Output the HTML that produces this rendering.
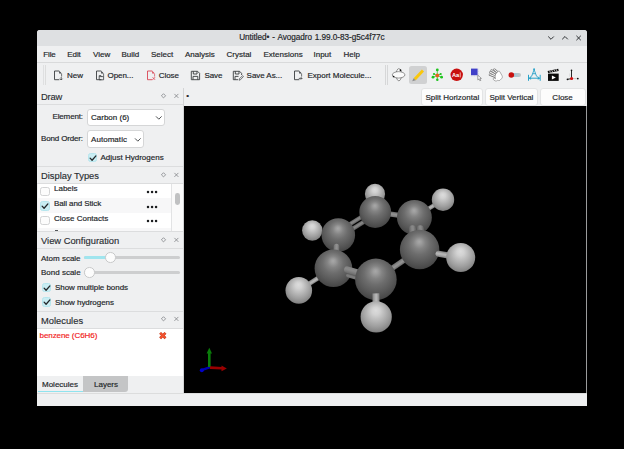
<!DOCTYPE html>
<html>
<head>
<meta charset="utf-8">
<style>
*{box-sizing:border-box;margin:0;padding:0}
html,body{width:624px;height:449px;overflow:hidden;background:#000}
body{font-family:"Liberation Sans",sans-serif;font-size:8px;color:#232629;position:relative;-webkit-text-stroke:0.18px #232629}
.a{position:absolute}
.t{position:absolute;white-space:nowrap;line-height:10px;font-size:8px}
.h{position:absolute;white-space:nowrap;line-height:12px;font-size:9.35px;left:41px;color:#2a2e32;-webkit-text-stroke:0.15px #2a2e32}
.ln{position:absolute;background:#dcddde;height:1px}
.cb{position:absolute;width:9.6px;height:9.4px;border-radius:2.5px;border:1px solid #d2d3d4;background:#fcfcfc}
.cb.on{background:#c9edf3;border-color:#b6e6ee}
.cb.on svg{position:absolute;left:0;top:0}
.combo{position:absolute;background:#fff;border:1px solid #d5d6d7;border-radius:3px;height:17px}
.btn{position:absolute;top:88.2px;height:17.8px;background:#fcfcfc;border:1px solid #e3e4e5;border-radius:3px;text-align:center;line-height:17.6px;font-size:8px}
</style>
</head>
<body>
<!-- window -->
<div class="a" style="left:37px;top:30px;width:550px;height:375.6px;background:#eff0f1;border-radius:3px 3px 0 0"></div>
<!-- title bar -->
<div class="a" style="left:37px;top:30px;width:550px;height:16px;background:#dee0e2;border-radius:3px 3px 0 0"></div>
<div class="t" id="ttl" style="left:239.2px;top:33.3px;font-size:8.2px;word-spacing:0.7px;letter-spacing:-0.05px">Untitled• - Avogadro 1.99.0-83-g5c4f77c</div>
<svg class="a" style="left:545px;top:32px" width="40" height="12" viewBox="0 0 40 12" fill="none" stroke="#2e3134" stroke-width="1">
  <path d="M3.2 4.5 L6 7.3 L8.8 4.5"/>
  <path d="M17.2 7.3 L20 4.5 L22.8 7.3"/>
  <path d="M31.4 3.8 L35.8 8.2 M35.8 3.8 L31.4 8.2"/>
</svg>
<!-- menu -->
<div class="t" style="left:43.3px;top:50px;letter-spacing:-0.15px">File</div>
<div class="t" style="left:67.3px;top:50px;letter-spacing:-0.1px">Edit</div>
<div class="t" style="left:93px;top:50px">View</div>
<div class="t" style="left:121.5px;top:50px">Build</div>
<div class="t" style="left:151px;top:50px">Select</div>
<div class="t" style="left:185px;top:50px">Analysis</div>
<div class="t" style="left:226.5px;top:50px">Crystal</div>
<div class="t" style="left:263.5px;top:50px">Extensions</div>
<div class="t" style="left:313.5px;top:50px">Input</div>
<div class="t" style="left:343.5px;top:50px">Help</div>
<!-- toolbar -->
<div class="ln" style="left:37px;top:62px;width:550px;background:#d9dadb"></div>
<div class="a" style="left:43px;top:65px;width:1px;height:20px;background:#dfe0e1"></div>
<div class="a" style="left:45px;top:65px;width:1px;height:20px;background:#dcdddd"></div>
<div class="t" style="left:67px;top:70.5px">New</div>
<div class="t" style="left:107.6px;top:70.5px;letter-spacing:-0.08px">Open...</div>
<div class="t" style="left:158.8px;top:70.5px;letter-spacing:-0.1px">Close</div>
<div class="t" style="left:204.5px;top:70.5px;letter-spacing:-0.1px">Save</div>
<div class="t" style="left:246.6px;top:70.5px;letter-spacing:-0.05px">Save As...</div>
<div class="t" style="left:307.4px;top:70.5px">Export Molecule...</div>
<div class="a" style="left:385px;top:65px;width:1px;height:20px;background:#d6d7d8"></div>
<div class="a" style="left:387px;top:65px;width:1px;height:20px;background:#d6d7d8"></div>
<!-- ICSTART -->
<svg class="a" style="left:53px;top:69.5px" width="11" height="11" viewBox="0 0 11 11" fill="none" stroke="#3a3d40" stroke-width="0.9" stroke-linejoin="miter">
<path d="M6.2 1 H1.5 V9.7 H6.4"/><path d="M8.6 3.6 V6.6" stroke-width="0.7"/><path d="M6.2 0.8 L8.8 3.4 H6.2 Z" fill="#3a3d40" stroke="none"/><path d="M8.2 7 V10 M6.9 8.7 L8.2 10 L9.5 8.7" stroke-width="0.8"/></svg>
<svg class="a" style="left:94.5px;top:69.5px" width="11" height="11" viewBox="0 0 11 11" fill="none" stroke="#3a3d40" stroke-width="0.9" stroke-linejoin="miter">
<path d="M6.2 1 H1.5 V9.7 H6.4"/><path d="M8.6 3.6 V6.6" stroke-width="0.7"/><path d="M6.2 0.8 L8.8 3.4 H6.2 Z" fill="#3a3d40" stroke="none"/><path d="M4.2 6.6 H8.6 V9.8 H4.2 Z M4.2 6.6 V5.6 H6 L6.6 6.6" stroke-width="0.8"/></svg>
<svg class="a" style="left:145.5px;top:69.5px" width="11" height="11" viewBox="0 0 11 11" fill="none" stroke="#da4453" stroke-width="0.9" stroke-linejoin="miter">
<path d="M6.2 1 H1.5 V9.7 H6.4"/><path d="M8.6 3.6 V6.6" stroke-width="0.7"/><path d="M6.2 0.8 L8.8 3.4 H6.2 Z" fill="#da4453" stroke="none"/><path d="M6.6 7.2 L9 9.8 M9 7.2 L6.6 9.8" stroke-width="0.8"/></svg>
<svg class="a" style="left:189.5px;top:69.5px" width="11" height="11" viewBox="0 0 11 11" fill="none" stroke="#3a3d40" stroke-width="0.9" stroke-linejoin="round">
<path d="M1.3 1.3 H7.6 L9.6 3.3 V9.7 H1.3 Z"/><path d="M3.3 1.3 V4 H7 V1.3"/><path d="M3 9.7 V6.4 H7.8 V9.7"/></svg>
<svg class="a" style="left:231.5px;top:69.5px" width="12" height="11" viewBox="0 0 12 11" fill="none" stroke="#3a3d40" stroke-width="0.9" stroke-linejoin="round">
<path d="M6 9.7 H1.3 V1.3 H7.6 L9.6 3.3 V5"/><path d="M3.3 1.3 V4 H7 V1.3"/><path d="M3 9.7 V6.4 H6.5"/><path d="M10.6 5.6 L7.4 8.8 L7 10.2 L8.4 9.8 L11.4 6.6 Z" stroke-width="0.7"/></svg>
<svg class="a" style="left:292.5px;top:69.5px" width="11" height="11" viewBox="0 0 11 11" fill="none" stroke="#3a3d40" stroke-width="0.9" stroke-linejoin="miter">
<path d="M6.2 1 H1.5 V9.7 H6.4"/><path d="M8.6 3.6 V6.6" stroke-width="0.7"/><path d="M6.2 0.8 L8.8 3.4 H6.2 Z" fill="#3a3d40" stroke="none"/><path d="M5.8 8.4 H9 M7.8 7.2 L9 8.4 L7.8 9.6" stroke-width="0.8"/></svg>
<svg class="a" style="left:391px;top:67px" width="16" height="16" viewBox="0 0 16 16" fill="#fbfbfb" stroke="#444" stroke-width="0.55">
<ellipse cx="7.85" cy="7.7" rx="2.7" ry="6.1"/><ellipse cx="7.6" cy="7.85" rx="6.3" ry="3.2"/>
<circle cx="9.5" cy="3.2" r="0.85" fill="#111" stroke="none"/><circle cx="2.6" cy="9.5" r="0.85" fill="#111" stroke="none"/></svg>
<div class="a" style="left:409px;top:66px;width:18px;height:18px;border-radius:2.5px;background:#d0d1d2"></div>
<svg class="a" style="left:409px;top:66px" width="18" height="18" viewBox="0 0 18 18">
<path d="M4.6 12.3 L12.9 3.6 L15 5.6 L6.8 14.3 Z" fill="#f9c70c"/><path d="M4.6 12.3 L6.8 14.3 L3.2 15.2 Z" fill="#8b8b8b"/></svg>
<svg class="a" style="left:428px;top:66px" width="18" height="18" viewBox="0 0 18 18" fill="#1dc31d">
<path d="M9.3 9.5 L9.3 4 M9.3 9.5 L9.3 13.8 M9.3 9.5 L6 8 M9.3 9.5 L12.7 8 M9.3 9.5 L5 11.2 M9.3 9.5 L13.6 11.2" stroke="#1dc31d" stroke-width="0.7"/>
<circle cx="9.3" cy="3.9" r="1.4"/><circle cx="9.3" cy="13.8" r="1.25"/><circle cx="6" cy="8" r="1.1"/><circle cx="12.7" cy="8" r="1.1"/><circle cx="5" cy="11.2" r="1.4"/><circle cx="13.6" cy="11.2" r="1.4"/>
<circle cx="9.3" cy="9.5" r="1.9" fill="#e8601c"/></svg>
<svg class="a" style="left:450px;top:68px" width="14" height="14" viewBox="0 0 14 14">
<circle cx="6.7" cy="6.8" r="6.2" fill="#c8100f"/>
<text x="2" y="8.9" font-family="Liberation Sans" font-weight="bold" font-size="5.7" fill="#fff" stroke="none" style="-webkit-text-stroke:0">Aa</text>
<rect x="9.7" y="4.4" width="1.1" height="5" fill="#eda0a0"/></svg>
<svg class="a" style="left:468px;top:66px" width="18" height="18" viewBox="0 0 18 18">
<rect x="3" y="2.6" width="6.6" height="6.6" fill="#4040c8"/>
<path d="M3 9.9 H10.3 V2.6" fill="none" stroke="#a0a0dc" stroke-width="0.5" stroke-dasharray="0.8 0.8"/>
<path d="M9.8 9.2 L9.8 13.9 L11 12.9 L11.9 14.8 L12.8 14.4 L11.9 12.5 L13.4 12.4 Z" fill="#fff" stroke="#666" stroke-width="0.6" stroke-linejoin="round"/></svg>
<svg class="a" style="left:487px;top:66px" width="18" height="18" viewBox="0 0 18 18" fill="none" stroke-linecap="round" stroke-linejoin="round">
<g stroke="#6a6a6a" stroke-width="2.3"><path d="M10.6 6.4 L7.4 3.6"/><path d="M9.4 7.6 L4.6 4.4"/><path d="M8.4 9 L3.4 6.2"/><path d="M8 10.6 L2.9 8.6"/></g>
<g stroke="#f4f4f4" stroke-width="1.1"><path d="M10.6 6.4 L7.4 3.6"/><path d="M9.4 7.6 L4.6 4.4"/><path d="M8.4 9 L3.4 6.2"/><path d="M8 10.6 L2.9 8.6"/></g>
<path d="M8.6 8 L11 5.6 C11.8 4.8 12.6 5.2 13 6 L15 9.6 C15.6 10.8 15.4 11.8 14.6 12.6 L13 14.2 C12.2 14.8 11.4 14.6 10.8 14.2 C10 15 9 15.2 8 14.8 L6.4 13.6 C5.6 12.8 6.4 11.8 7.4 12.2 L8.6 12.8 C8 11.6 8 10 8.6 8 Z" fill="#fff" stroke="#777" stroke-width="0.6"/>
</svg>
<svg class="a" style="left:506px;top:66px" width="18" height="18" viewBox="0 0 18 18">
<defs><linearGradient id="pg" x1="0" x2="1"><stop offset="0" stop-color="#8fc8de"/><stop offset="1" stop-color="#c4c4c4"/></linearGradient></defs>
<rect x="5" y="7" width="10" height="4" rx="2" fill="url(#pg)"/><circle cx="5.3" cy="9" r="2.8" fill="#c8100f"/></svg>
<svg class="a" style="left:525px;top:66px" width="18" height="18" viewBox="0 0 18 18" fill="none" stroke="#2aa3c9" stroke-width="1">
<path d="M3.5 8.8 V14.8 M15.2 8.8 V14.8 M4 12.2 H14.8" /><path d="M5.8 10.8 L3.9 12.2 L5.8 13.6 Z M12.9 10.8 L14.8 12.2 L12.9 13.6 Z" fill="#2aa3c9" stroke-width="0.3"/>
<path d="M5.6 10.6 L6.7 10.2 L9.1 3.6 L11.5 10.2 L12.6 10.6 M7.6 7.7 H10.6" stroke-width="0.9" stroke-linejoin="round"/><circle cx="9.1" cy="3.3" r="0.95" fill="#2aa3c9" stroke="none"/></svg>
<svg class="a" style="left:544px;top:66px" width="18" height="18" viewBox="0 0 18 18">
<rect x="4" y="7.6" width="10.7" height="7.3" fill="#0a0a0a"/>
<path d="M3.6 4.9 L14.2 2.7 L14.7 4.9 L4.1 7.1 Z" fill="#0a0a0a"/>
<path d="M5.6 4.7 L6.4 6.4 M7.8 4.2 L8.6 5.9 M10 3.8 L10.8 5.4 M12.2 3.3 L13 5" stroke="#eee" stroke-width="0.8"/>
<path d="M7.9 9.4 L11.8 11.4 L7.9 13.4 Z" fill="#fff"/></svg>
<svg class="a" style="left:563px;top:66px" width="18" height="18" viewBox="0 0 18 18" stroke="#111" stroke-width="0.9" fill="none">
<path d="M6.7 7.4 V10.6" stroke="#d2d2d2" stroke-width="0.6"/><path d="M8.5 12.5 V4.4"/><path d="M4.6 13.3 L8.5 12.6"/><path d="M10.4 12.6 H13.6" stroke="#bbb" stroke-width="0.8"/>
<circle cx="8.5" cy="4.4" r="0.8" fill="#111" stroke="none"/><circle cx="4.5" cy="13.3" r="0.9" fill="#111" stroke="none"/><circle cx="14.8" cy="12.6" r="0.9" fill="#111" stroke="none"/><circle cx="8.6" cy="12.5" r="1.6" fill="#d01010" stroke="none"/></svg>
<!-- ICEND -->

<!-- dock: Draw -->
<div class="h" style="top:91px;letter-spacing:-0.15px">Draw</div>
<div class="ln" style="left:37px;top:104px;width:146px"></div>
<div class="t" style="left:52.5px;top:112px;letter-spacing:-0.15px">Element:</div>
<div class="combo" style="left:87px;top:109px;width:78px"></div>
<div class="t" style="left:91px;top:112.5px">Carbon (6)</div>
<div class="t" style="left:41px;top:133.5px;letter-spacing:-0.15px">Bond Order:</div>
<div class="combo" style="left:87px;top:130px;width:57px;height:17.5px"></div>
<div class="t" style="left:91px;top:134.5px;letter-spacing:0.05px">Automatic</div>
<div class="cb on" style="left:87.8px;top:152.7px"><svg width="8" height="8" viewBox="0 0 8 8" style="position:absolute;left:0;top:0"><path d="M1.1 4.1 L3.1 6.2 L6.9 1.9" fill="none" stroke="#232629" stroke-width="1.3" stroke-linecap="round" stroke-linejoin="round"/></svg></div>
<div class="t" style="left:100.5px;top:153px">Adjust Hydrogens</div>
<!-- dock: Display Types -->
<div class="ln" style="left:37px;top:166px;width:146px"></div>
<div class="h" style="top:169.5px">Display Types</div>
<div class="ln" style="left:37px;top:183px;width:146px"></div>
<div class="a" style="left:38px;top:184px;width:133px;height:47px;background:#fff"></div>
<div class="a" style="left:38px;top:198px;width:133px;height:15px;background:#f7f7f8"></div>
<div class="a" style="left:38px;top:228px;width:133px;height:3px;background:#f7f7f8"></div><div class="a" style="left:55px;top:230px;width:3px;height:1px;background:#55585b"></div><div class="a" style="left:171px;top:184px;width:12px;height:47px;background:#fafafa"></div><div class="a" style="left:171px;top:184px;width:1px;height:47px;background:#e2e3e4"></div>
<div class="a" style="left:175px;top:193.3px;width:4.8px;height:11.8px;border-radius:2.4px;background:#c0c1c2"></div>
<div class="cb" style="left:40.2px;top:186.6px"></div>
<div class="cb on" style="left:40.2px;top:201.3px"><svg width="8" height="8" viewBox="0 0 8 8" style="position:absolute;left:0;top:0"><path d="M1.1 4.1 L3.1 6.2 L6.9 1.9" fill="none" stroke="#232629" stroke-width="1.3" stroke-linecap="round" stroke-linejoin="round"/></svg></div>
<div class="cb" style="left:40.2px;top:216px"></div>
<div class="t" style="left:54px;top:184px">Labels</div>
<div class="t" style="left:54px;top:199px;letter-spacing:-0.1px">Ball and Stick</div>
<div class="t" style="left:54px;top:213.5px">Close Contacts</div>
<!-- dock: View configuration -->
<div class="ln" style="left:37px;top:231px;width:146px"></div>
<div class="h" style="top:234.5px">View Configuration</div>
<div class="ln" style="left:37px;top:248px;width:146px"></div>
<div class="t" style="left:41px;top:253.5px">Atom scale</div>
<div class="t" style="left:41px;top:268px">Bond scale</div>
<div class="cb on" style="left:41.8px;top:282.8px"><svg width="8" height="8" viewBox="0 0 8 8" style="position:absolute;left:0;top:0"><path d="M1.1 4.1 L3.1 6.2 L6.9 1.9" fill="none" stroke="#232629" stroke-width="1.3" stroke-linecap="round" stroke-linejoin="round"/></svg></div>
<div class="t" style="left:55px;top:282.8px;letter-spacing:-0.04px">Show multiple bonds</div>
<div class="cb on" style="left:41.8px;top:297.4px"><svg width="8" height="8" viewBox="0 0 8 8" style="position:absolute;left:0;top:0"><path d="M1.1 4.1 L3.1 6.2 L6.9 1.9" fill="none" stroke="#232629" stroke-width="1.3" stroke-linecap="round" stroke-linejoin="round"/></svg></div>
<div class="t" style="left:55px;top:297.8px;letter-spacing:-0.05px">Show hydrogens</div>
<!-- dock: Molecules -->
<div class="ln" style="left:37px;top:311px;width:146px"></div>
<div class="h" style="top:314.5px">Molecules</div>
<div class="ln" style="left:37px;top:328px;width:146px"></div>
<div class="a" style="left:37px;top:329px;width:146px;height:47px;background:#fff"></div>
<div class="t" style="left:39.5px;top:331px;color:#f21d1d;-webkit-text-stroke:0.18px #f21d1d;letter-spacing:-0.07px">benzene (C6H6)</div>
<svg class="a" style="left:158px;top:91px" width="24" height="10" viewBox="0 0 24 10" fill="none" stroke="#808386" stroke-width="0.8">
<path d="M5.5 2.7 L7.6 4.8 L5.5 6.9 L3.4 4.8 Z"/><path d="M16.4 2.9 L20.4 6.9 M20.4 2.9 L16.4 6.9"/></svg><svg class="a" style="left:158px;top:169.5px" width="24" height="10" viewBox="0 0 24 10" fill="none" stroke="#808386" stroke-width="0.8">
<path d="M5.5 2.7 L7.6 4.8 L5.5 6.9 L3.4 4.8 Z"/><path d="M16.4 2.9 L20.4 6.9 M20.4 2.9 L16.4 6.9"/></svg><svg class="a" style="left:158px;top:234.5px" width="24" height="10" viewBox="0 0 24 10" fill="none" stroke="#808386" stroke-width="0.8">
<path d="M5.5 2.7 L7.6 4.8 L5.5 6.9 L3.4 4.8 Z"/><path d="M16.4 2.9 L20.4 6.9 M20.4 2.9 L16.4 6.9"/></svg><svg class="a" style="left:158px;top:314px" width="24" height="10" viewBox="0 0 24 10" fill="none" stroke="#808386" stroke-width="0.8">
<path d="M5.5 2.7 L7.6 4.8 L5.5 6.9 L3.4 4.8 Z"/><path d="M16.4 2.9 L20.4 6.9 M20.4 2.9 L16.4 6.9"/></svg><svg class="a" style="left:154px;top:114px" width="10" height="8" viewBox="0 0 10 8" fill="none" stroke="#3a3d40" stroke-width="0.9"><path d="M2 2.4 L4.8 5.2 L7.6 2.4"/></svg>
<svg class="a" style="left:132.5px;top:135.5px" width="10" height="8" viewBox="0 0 10 8" fill="none" stroke="#3a3d40" stroke-width="0.9"><path d="M2 2.4 L4.8 5.2 L7.6 2.4"/></svg><svg class="a" style="left:146px;top:190px" width="13" height="4" viewBox="0 0 13 4" fill="#1b1d1f"><circle cx="2" cy="2" r="1.25"/><circle cx="6.05" cy="2" r="1.25"/><circle cx="10.05" cy="2" r="1.25"/></svg><svg class="a" style="left:146px;top:204.7px" width="13" height="4" viewBox="0 0 13 4" fill="#1b1d1f"><circle cx="2" cy="2" r="1.25"/><circle cx="6.05" cy="2" r="1.25"/><circle cx="10.05" cy="2" r="1.25"/></svg><svg class="a" style="left:146px;top:219.3px" width="13" height="4" viewBox="0 0 13 4" fill="#1b1d1f"><circle cx="2" cy="2" r="1.25"/><circle cx="6.05" cy="2" r="1.25"/><circle cx="10.05" cy="2" r="1.25"/></svg><div class="a" style="left:84px;top:256.1px;width:96px;height:3px;border-radius:1.5px;background:#cdcecf"></div>
<div class="a" style="left:84px;top:256.1px;width:26px;height:3px;border-radius:1.5px;background:#a0e5ee"></div>
<div class="a" style="left:105px;top:252.4px;width:10.6px;height:10.6px;border-radius:5.3px;background:#fcfcfc;border:1px solid #c8c9ca"></div>
<div class="a" style="left:84px;top:271px;width:96px;height:3px;border-radius:1.5px;background:#cdcecf"></div>
<div class="a" style="left:84.1px;top:267.2px;width:10.6px;height:10.6px;border-radius:5.3px;background:#fcfcfc;border:1px solid #c8c9ca"></div>
<svg class="a" style="left:158px;top:331px" width="10" height="9" viewBox="0 0 10 9"><path d="M2.1 1.9 L7.5 7.3 M7.5 1.9 L2.1 7.3" stroke="#c4401e" stroke-width="2.7" stroke-linecap="butt"/><path d="M2.3 2.1 L7.3 7.1 M7.3 2.1 L2.3 7.1" stroke="#f4512f" stroke-width="1.7" stroke-linecap="butt"/></svg>
<!-- tabs -->
<div class="a" style="left:83px;top:376px;width:45px;height:16px;background:#c4c5c6;border-radius:0 0 3px 0"></div>
<div class="a" style="left:38px;top:391px;width:45px;height:1px;background:#8fe3ee"></div>
<div class="t" style="left:42px;top:379.5px">Molecules</div>
<div class="t" style="left:94px;top:379.5px">Layers</div>
<div class="ln" style="left:37px;top:392.5px;width:550px;background:#dcdddd"></div>
<!-- GL area -->
<div class="a" style="left:183px;top:88px;width:1px;height:305px;background:#d3d4d5"></div>
<div class="t" style="left:186.3px;top:91.3px">•</div>
<div class="btn" style="left:421.3px;width:62px">Split Horizontal</div>
<div class="btn" style="left:484.6px;width:53.6px">Split Vertical</div>
<div class="btn" style="left:539.6px;width:46px">Close</div>
<div class="a" id="gl" style="left:184px;top:106px;width:402px;height:287px;background:#000"></div>
<div class="a" style="left:586px;top:106px;width:1px;height:287px;background:#9a9b9c"></div>
<!-- MOLSTART -->
<svg class="a" style="left:184px;top:106px" width="402" height="287" viewBox="184 106 402 287">
<defs>
<radialGradient id="gc" cx="0.5" cy="0.42" r="0.62" fx="0.49" fy="0.3">
<stop offset="0" stop-color="#a8a8a8"/><stop offset="0.1" stop-color="#9c9c9c"/><stop offset="0.25" stop-color="#838383"/><stop offset="0.45" stop-color="#6d6d6d"/><stop offset="0.7" stop-color="#5a5a5a"/><stop offset="0.9" stop-color="#494949"/><stop offset="1" stop-color="#3a3a3a"/>
</radialGradient>
<radialGradient id="gh" cx="0.5" cy="0.42" r="0.62" fx="0.49" fy="0.28">
<stop offset="0" stop-color="#dcdcdc"/><stop offset="0.2" stop-color="#d2d2d2"/><stop offset="0.45" stop-color="#b8b8b8"/><stop offset="0.7" stop-color="#9e9e9e"/><stop offset="0.9" stop-color="#868686"/><stop offset="1" stop-color="#6c6c6c"/>
</radialGradient>
<linearGradient id="b1" gradientUnits="userSpaceOnUse" x1="359.29" y1="227.17" x2="357.07" y2="223.61"><stop offset="0" stop-color="#5a5a5a"/><stop offset="0.4" stop-color="#808080"/><stop offset="0.6" stop-color="#868686"/><stop offset="1" stop-color="#606060"/></linearGradient>
<linearGradient id="b2" gradientUnits="userSpaceOnUse" x1="356.43" y1="222.59" x2="354.21" y2="219.03"><stop offset="0" stop-color="#5a5a5a"/><stop offset="0.4" stop-color="#808080"/><stop offset="0.6" stop-color="#868686"/><stop offset="1" stop-color="#606060"/></linearGradient>
<linearGradient id="b3" gradientUnits="userSpaceOnUse" x1="394.45" y1="217.28" x2="395.15" y2="212.12"><stop offset="0" stop-color="#707070"/><stop offset="0.4" stop-color="#8e8e8e"/><stop offset="0.6" stop-color="#929292"/><stop offset="1" stop-color="#686868"/></linearGradient>
<linearGradient id="b4" gradientUnits="userSpaceOnUse" x1="429.81" y1="210.34" x2="427.59" y2="206.76"><stop offset="0" stop-color="#808080"/><stop offset="0.4" stop-color="#b0b0b0"/><stop offset="0.6" stop-color="#b6b6b6"/><stop offset="1" stop-color="#7c7c7c"/></linearGradient>
<linearGradient id="b5" gradientUnits="userSpaceOnUse" x1="396.23" y1="262.22" x2="399.27" y2="266.68"><stop offset="0" stop-color="#707070"/><stop offset="0.4" stop-color="#8e8e8e"/><stop offset="0.6" stop-color="#929292"/><stop offset="1" stop-color="#686868"/></linearGradient>
<linearGradient id="b6" gradientUnits="userSpaceOnUse" x1="314.86" y1="277.41" x2="317.34" y2="281.29"><stop offset="0" stop-color="#808080"/><stop offset="0.4" stop-color="#b0b0b0"/><stop offset="0.6" stop-color="#b6b6b6"/><stop offset="1" stop-color="#7c7c7c"/></linearGradient>
<linearGradient id="b7" gradientUnits="userSpaceOnUse" x1="333.60" y1="249.71" x2="339.20" y2="249.89"><stop offset="0" stop-color="#707070"/><stop offset="0.4" stop-color="#8e8e8e"/><stop offset="0.6" stop-color="#929292"/><stop offset="1" stop-color="#686868"/></linearGradient>
<linearGradient id="b8" gradientUnits="userSpaceOnUse" x1="409.16" y1="231.15" x2="416.14" y2="230.65"><stop offset="0" stop-color="#626262"/><stop offset="0.4" stop-color="#868686"/><stop offset="0.6" stop-color="#8a8a8a"/><stop offset="1" stop-color="#626262"/></linearGradient>
<linearGradient id="b9" gradientUnits="userSpaceOnUse" x1="416.96" y1="231.15" x2="423.94" y2="230.65"><stop offset="0" stop-color="#626262"/><stop offset="0.4" stop-color="#868686"/><stop offset="0.6" stop-color="#8a8a8a"/><stop offset="1" stop-color="#626262"/></linearGradient>
<linearGradient id="b10" gradientUnits="userSpaceOnUse" x1="353.42" y1="279.03" x2="354.38" y2="275.77"><stop offset="0" stop-color="#707070"/><stop offset="0.4" stop-color="#7c7c7c"/><stop offset="0.6" stop-color="#7c7c7c"/><stop offset="1" stop-color="#6a6a6a"/></linearGradient>
<linearGradient id="b11" gradientUnits="userSpaceOnUse" x1="353.73" y1="274.78" x2="355.47" y2="268.62"><stop offset="0" stop-color="#6c6c6c"/><stop offset="0.4" stop-color="#828282"/><stop offset="0.6" stop-color="#8a8a8a"/><stop offset="1" stop-color="#828282"/></linearGradient>
<linearGradient id="b12" gradientUnits="userSpaceOnUse" x1="372.50" y1="299.26" x2="379.50" y2="299.14"><stop offset="0" stop-color="#808080"/><stop offset="0.4" stop-color="#b0b0b0"/><stop offset="0.6" stop-color="#b6b6b6"/><stop offset="1" stop-color="#7c7c7c"/></linearGradient>
<linearGradient id="b13" gradientUnits="userSpaceOnUse" x1="449.12" y1="258.76" x2="450.18" y2="252.64"><stop offset="0" stop-color="#808080"/><stop offset="0.4" stop-color="#b0b0b0"/><stop offset="0.6" stop-color="#b6b6b6"/><stop offset="1" stop-color="#7c7c7c"/></linearGradient></defs>
<circle cx="375.0" cy="193.9" r="10.1" fill="url(#gh)"/>
<line x1="339.7" y1="236.9" x2="376.6" y2="213.9" stroke="url(#b1)" stroke-width="4.2"/>
<line x1="336.9" y1="232.3" x2="373.8" y2="209.3" stroke="url(#b2)" stroke-width="4.2"/>
<line x1="375.2" y1="212.0" x2="414.4" y2="217.4" stroke="url(#b3)" stroke-width="5.2"/>
<line x1="414.4" y1="217.4" x2="443.0" y2="199.7" stroke="url(#b4)" stroke-width="4.2"/>
<line x1="419.6" y1="249.5" x2="375.9" y2="279.4" stroke="url(#b5)" stroke-width="5.4"/>
<line x1="333.4" y1="268.3" x2="298.8" y2="290.4" stroke="url(#b6)" stroke-width="4.6"/>
<circle cx="375.2" cy="212.0" r="15.9" fill="url(#gc)"/>
<circle cx="312.3" cy="230.5" r="10.2" fill="url(#gh)"/>
<circle cx="338.3" cy="235.0" r="16.8" fill="url(#gc)"/>
<circle cx="443.0" cy="199.7" r="11.2" fill="url(#gh)"/>
<circle cx="414.4" cy="217.4" r="17.45" fill="url(#gc)"/>
<line x1="336.5" y1="246.6" x2="336.3" y2="253.0" stroke="url(#b7)" stroke-width="5.6" stroke-linecap="round"/>
<line x1="412.5" y1="228.8" x2="412.8" y2="233.0" stroke="url(#b8)" stroke-width="7" stroke-linecap="round"/>
<line x1="420.3" y1="228.8" x2="420.6" y2="233.0" stroke="url(#b9)" stroke-width="7" stroke-linecap="round"/>
<circle cx="333.4" cy="268.3" r="18.8" fill="url(#gc)"/>
<circle cx="419.6" cy="249.5" r="19.7" fill="url(#gc)"/>
<line x1="348" y1="272" x2="361" y2="275.8" stroke="#5c5c5c" stroke-width="8"/>
<line x1="347.8" y1="275.6" x2="360.0" y2="279.2" stroke="url(#b10)" stroke-width="3.4" stroke-linecap="round"/>
<line x1="347.2" y1="269.6" x2="362.0" y2="273.8" stroke="url(#b11)" stroke-width="6.4" stroke-linecap="round"/>
<circle cx="375.9" cy="279.4" r="20.8" fill="url(#gc)"/>
<line x1="375.9" y1="293.4" x2="376.1" y2="305.0" stroke="url(#b12)" stroke-width="7"/>
<line x1="438.6" y1="253.8" x2="460.7" y2="257.6" stroke="url(#b13)" stroke-width="6.2" stroke-linecap="round"/>
<circle cx="298.8" cy="290.4" r="13.3" fill="url(#gh)"/>
<circle cx="460.7" cy="257.6" r="14.5" fill="url(#gh)"/>
<circle cx="376.2" cy="316.9" r="15.6" fill="url(#gh)"/>
<g><line x1="209.5" y1="367.3" x2="203" y2="369.6" stroke="#0000b0" stroke-width="2.4" stroke-linecap="round"/><circle cx="201.8" cy="370.2" r="2" fill="#0000c8"/>
<line x1="209.3" y1="367" x2="209.3" y2="352" stroke="#0a7d0a" stroke-width="2.6"/><path d="M206.6 353.5 L209.3 347.8 L212 353.5 Z" fill="#0a7d0a"/>
<line x1="210" y1="367.6" x2="222" y2="368.3" stroke="#9a0000" stroke-width="2.6"/><path d="M221.5 365.6 L226.8 368.5 L221.5 371.2 Z" fill="#9a0000"/></g>
</svg>
<!-- MOLEND -->
</body>
</html>
